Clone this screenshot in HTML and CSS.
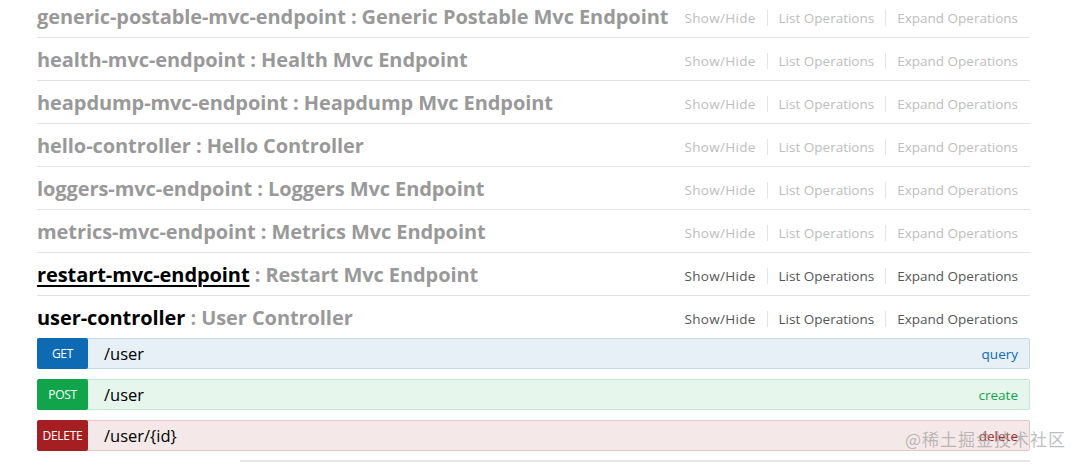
FILE: index.html
```html
<!DOCTYPE html>
<html lang="en">
<head>
<meta charset="utf-8">
<title>API</title>
<link rel="stylesheet" href="styles.css">
</head>
<body>
<div class="page">
  <ul class="resources">
    <li class="resource">
      <h2 class="heading"><span class="name">generic-postable-mvc-endpoint</span> <span class="desc">: Generic Postable Mvc Endpoint</span></h2>
      <ul class="options"><li>Show/Hide</li><li>List Operations</li><li>Expand Operations</li></ul>
    </li>
    <li class="resource">
      <h2 class="heading"><span class="name">health-mvc-endpoint</span> <span class="desc">: Health Mvc Endpoint</span></h2>
      <ul class="options"><li>Show/Hide</li><li>List Operations</li><li>Expand Operations</li></ul>
    </li>
    <li class="resource">
      <h2 class="heading"><span class="name">heapdump-mvc-endpoint</span> <span class="desc">: Heapdump Mvc Endpoint</span></h2>
      <ul class="options"><li>Show/Hide</li><li>List Operations</li><li>Expand Operations</li></ul>
    </li>
    <li class="resource">
      <h2 class="heading"><span class="name">hello-controller</span> <span class="desc">: Hello Controller</span></h2>
      <ul class="options"><li>Show/Hide</li><li>List Operations</li><li>Expand Operations</li></ul>
    </li>
    <li class="resource">
      <h2 class="heading"><span class="name">loggers-mvc-endpoint</span> <span class="desc">: Loggers Mvc Endpoint</span></h2>
      <ul class="options"><li>Show/Hide</li><li>List Operations</li><li>Expand Operations</li></ul>
    </li>
    <li class="resource">
      <h2 class="heading"><span class="name">metrics-mvc-endpoint</span> <span class="desc">: Metrics Mvc Endpoint</span></h2>
      <ul class="options"><li>Show/Hide</li><li>List Operations</li><li>Expand Operations</li></ul>
    </li>
    <li class="resource active">
      <h2 class="heading"><span class="name hover">restart-mvc-endpoint</span> <span class="desc">: Restart Mvc Endpoint</span></h2>
      <ul class="options"><li>Show/Hide</li><li>List Operations</li><li>Expand Operations</li></ul>
    </li>
    <li class="resource active open">
      <h2 class="heading"><span class="name">user-controller</span> <span class="desc">: User Controller</span></h2>
      <ul class="options"><li>Show/Hide</li><li>List Operations</li><li>Expand Operations</li></ul>
    </li>
  </ul>
  <ul class="operations">
    <li class="op get"><span class="method">GET</span><span class="path">/user</span><span class="summary">query</span></li>
    <li class="op post"><span class="method">POST</span><span class="path">/user</span><span class="summary">create</span></li>
    <li class="op delete"><span class="method">DELETE</span><span class="path">/user/{id}</span><span class="summary">delete</span></li>
  </ul>
  <div class="footer-line"></div>
</div>
<div class="watermark">@稀土掘金技术社区</div>
</body>
</html>
```
FILE: styles.css
```css
* { box-sizing: border-box; }
html, body { margin: 0; padding: 0; background: #fff; }
body {
  font-family: "Open Sans", "Noto Sans", "Noto Sans CJK SC", sans-serif;
  width: 1082px;
  height: 470px;
  overflow: hidden;
  position: relative;
}
ul { list-style: none; margin: 0; padding: 0; }
.page {
  width: 993px;
  margin: -5px 0 0 37px;
}
.resource {
  display: flex;
  align-items: center;
  justify-content: space-between;
  height: 43px;
  border-bottom: 1px solid #e2e2e2;
}
.resource.open { border-bottom: none; height: 42px; }
.heading {
  margin: 0;
  font-size: 20px;
  font-weight: 700;
  color: #999;
  white-space: nowrap;
  letter-spacing: -0.08px;
}
.resource.active .name { color: #000; }
.resource.active .desc { color: #999; }
.name.hover { text-decoration: underline; text-underline-offset: 3px; }
.options {
  display: flex;
  font-size: 13.5px;
  color: #bdbdbd;
  padding-right: 12px;
  padding-top: 4px;
  white-space: nowrap;
}
.options li {
  padding: 0 11px;
  border-left: 1px solid #e4e4e4;
  line-height: 16px;
}
.options li:first-child { border-left: none; letter-spacing: 0.3px; }
.options li:last-child { padding-right: 0; }
.resource.active .options { color: #555; }
.operations { display: flex; flex-direction: column; gap: 10px; }
.op {
  display: flex;
  align-items: center;
  height: 31px;
  border: 1px solid;
  border-radius: 2px;
}
.method {
  width: 51px;
  height: 31px;
  margin: -1px 0 -1px -1px;
  border-radius: 2px;
  color: #fff;
  font-size: 12px;
  display: flex;
  align-items: center;
  justify-content: center;
  letter-spacing: -0.3px;
}
.path {
  flex: 1;
  padding-left: 16px;
  font-size: 16.5px;
  color: #000;
}
.summary {
  padding-right: 11px;
  font-size: 13.5px;
}
.get { background: #e7f0f7; border-color: #c3d9ec; }
.get .method { background: #0f6ab4; }
.get .summary { color: #0f6ab4; }
.post { background: #e7f6ec; border-color: #c3e8d1; }
.post .method { background: #10a54a; }
.post .summary { color: #10a54a; }
.delete { background: #f5e8e8; border-color: #e8c6c7; }
.delete .method { background: #a41e22; }
.delete .summary { color: #a41e22; }
.footer-line {
  margin: 9px 0 0 203px;
  border-top: 2px solid #e6e6e6;
}
.watermark {
  position: absolute;
  left: 905px;
  top: 426px;
  font-size: 17px;
  color: rgba(160, 160, 160, 0.7);
  font-family: "Noto Sans CJK SC", sans-serif;
  letter-spacing: 1px;
}
```
